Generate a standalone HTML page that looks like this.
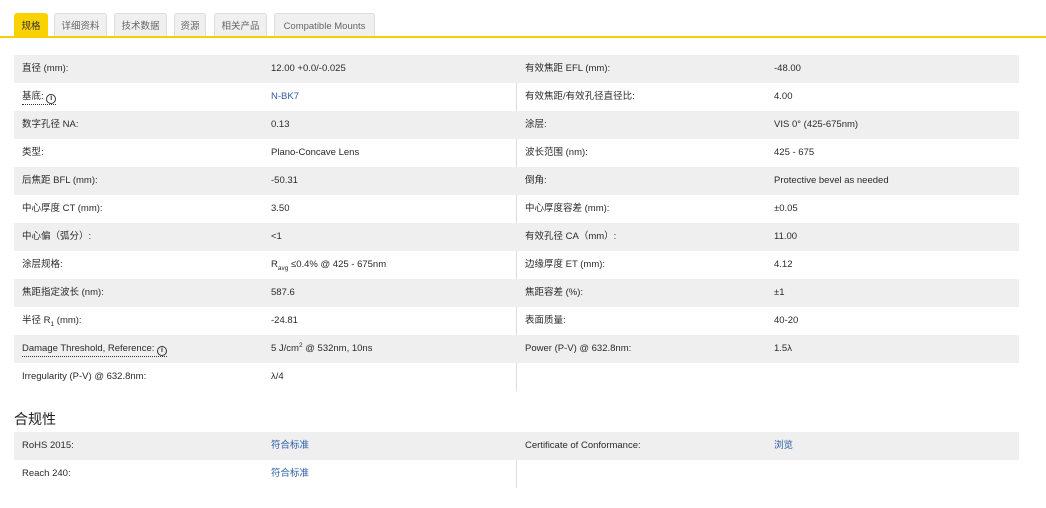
<!DOCTYPE html>
<html><head><meta charset="utf-8"><style>
*{margin:0;padding:0;box-sizing:border-box}
body{width:1046px;height:508px;background:#fff;font-family:"Liberation Sans","Noto Sans CJK SC",sans-serif;font-size:9.5px;color:#2a2a2a;position:relative;overflow:hidden}
.tab{position:absolute;top:13px;height:24px;line-height:26px;text-align:center;background:#f0f0f0;border:1px solid #ddd;border-bottom:none;border-radius:3px 3px 0 0;color:#666;font-size:9.5px}
.tab.a{background:#f9d200;border-color:#f9d200;color:#333}
.line{position:absolute;left:0;top:36px;width:1046px;height:2px;background:#f5d000}
.tbl{position:absolute;left:14px;width:1005px}
.row{height:28px;position:relative;line-height:28px}
.row.g{background:#efefef}
.row span{position:absolute;top:0;white-space:nowrap}
.c1{left:8px}.c2{left:257px}.c3{left:511px}.c4{left:760px}
.div{position:absolute;left:502px;top:0;bottom:0;width:1px;background:#ddd}
.lk{color:#2a5ca8}
.u{border-bottom:1px dotted #333;line-height:12px;top:8px!important}
h3{position:absolute;left:14px;top:409px;font-size:14px;font-weight:normal;color:#222}
sub,sup{font-size:6.5px;line-height:0}
.i{display:inline-block;width:10px;height:10px;border:1.5px solid #333;border-radius:50%;font-size:7px;line-height:7px;text-align:center;font-weight:bold;vertical-align:-1px}
</style></head><body>
<div class="tab a" style="left:14px;width:34px">规格</div>
<div class="tab" style="left:54px;width:53px">详细资料</div>
<div class="tab" style="left:114px;width:53px">技术数据</div>
<div class="tab" style="left:174px;width:32px">资源</div>
<div class="tab" style="left:214px;width:53px">相关产品</div>
<div class="tab" style="left:274px;width:101px">Compatible Mounts</div>
<div class="line"></div>
<div class="tbl" style="top:55px">
<div class="div"></div>
<div class="row g"><span class="c1">直径 (mm):</span><span class="c2">12.00 +0.0/-0.025</span><span class="c3">有效焦距 EFL (mm):</span><span class="c4">-48.00</span></div>
<div class="row"><span class="c1 u">基底: <b class="i">i</b></span><span class="c2 lk">N-BK7</span><span class="c3">有效焦距/有效孔径直径比:</span><span class="c4">4.00</span></div>
<div class="row g"><span class="c1">数字孔径 NA:</span><span class="c2">0.13</span><span class="c3">涂层:</span><span class="c4">VIS 0° (425-675nm)</span></div>
<div class="row"><span class="c1">类型:</span><span class="c2">Plano-Concave Lens</span><span class="c3">波长范围 (nm):</span><span class="c4">425 - 675</span></div>
<div class="row g"><span class="c1">后焦距 BFL (mm):</span><span class="c2">-50.31</span><span class="c3">倒角:</span><span class="c4">Protective bevel as needed</span></div>
<div class="row"><span class="c1">中心厚度 CT (mm):</span><span class="c2">3.50</span><span class="c3">中心厚度容差 (mm):</span><span class="c4">±0.05</span></div>
<div class="row g"><span class="c1">中心偏（弧分）:</span><span class="c2">&lt;1</span><span class="c3">有效孔径 CA（mm）:</span><span class="c4">11.00</span></div>
<div class="row"><span class="c1">涂层规格:</span><span class="c2">R<sub>avg</sub> ≤0.4% @ 425 - 675nm</span><span class="c3">边缘厚度 ET (mm):</span><span class="c4">4.12</span></div>
<div class="row g"><span class="c1">焦距指定波长 (nm):</span><span class="c2">587.6</span><span class="c3">焦距容差 (%):</span><span class="c4">±1</span></div>
<div class="row"><span class="c1">半径 R<sub>1</sub> (mm):</span><span class="c2">-24.81</span><span class="c3">表面质量:</span><span class="c4">40-20</span></div>
<div class="row g"><span class="c1 u">Damage Threshold, Reference: <b class="i">i</b></span><span class="c2">5 J/cm<sup>2</sup> @ 532nm, 10ns</span><span class="c3">Power (P-V) @ 632.8nm:</span><span class="c4">1.5λ</span></div>
<div class="row"><span class="c1">Irregularity (P-V) @ 632.8nm:</span><span class="c2">λ/4</span></div>
</div>
<h3>合规性</h3>
<div class="tbl" style="top:432px">
<div class="div"></div>
<div class="row g"><span class="c1">RoHS 2015:</span><span class="c2 lk">符合标准</span><span class="c3">Certificate of Conformance:</span><span class="c4 lk">浏览</span></div>
<div class="row"><span class="c1">Reach 240:</span><span class="c2 lk">符合标准</span></div>
</div>
</body></html>
